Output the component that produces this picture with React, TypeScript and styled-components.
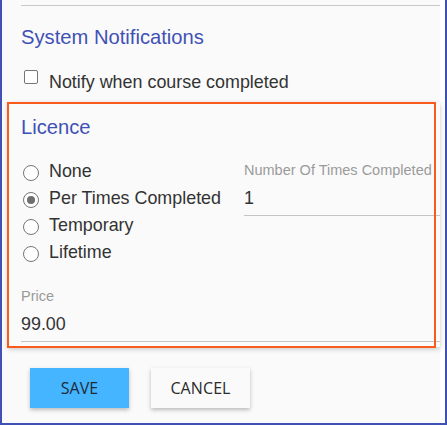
import React from "react";
import styled, { createGlobalStyle } from "styled-components";

const Global = createGlobalStyle`
  html, body { margin: 0; padding: 0; background: #ffffff; }
  * { box-sizing: border-box; }
`;

const Frame = styled.div`
  width: 447px;
  height: 425px;
  border: 2px solid #3f51b5;
  border-top: none;
  display: flex;
  background: #ffffff;
  font-family: "Liberation Sans", Arial, sans-serif;
  overflow: hidden;
`;

const Panel = styled.div`
  width: 438px;
  background: #fafafa;
  padding-left: 19px;
  display: flex;
  flex-direction: column;
`;

const Rule = styled.div`
  height: 1px;
  margin-top: 5px;
  background: #c8c8c8;
`;

const Title = styled.h2<{ $top: number }>`
  margin: ${(p) => p.$top}px 0 0 0;
  font-size: 20.2px;
  line-height: 24px;
  font-weight: normal;
  color: #3f51b5;
`;

const CheckRow = styled.label`
  display: flex;
  align-items: flex-start;
  margin-top: 22px;
  font-size: 17.9px;
  line-height: 22px;
  color: #333333;
`;

const Box = styled.span`
  width: 14px;
  height: 14px;
  margin: -1px 11px 0 3px;
  border: 1px solid #767676;
  border-radius: 2px;
  background: #ffffff;
  flex: none;
`;

const Card = styled.section`
  position: relative;
  margin: 9px 0 0 -13px;
  padding: 13px 0 5px 13px;
  background: #fafafa;
  box-shadow: 0 2px 5px rgba(0, 0, 0, 0.22);
`;

const Highlight = styled.div`
  position: absolute;
  left: -1px;
  top: 0;
  width: 429px;
  height: 246px;
  border: 2px solid #fa5a1c;
  pointer-events: none;
`;

const Columns = styled.div`
  display: grid;
  grid-template-columns: 223px 1fr;
  margin-top: 19px;
`;

const RadioGroup = styled.div`
  display: flex;
  flex-direction: column;
`;

const RadioRow = styled.label`
  display: flex;
  align-items: flex-start;
  height: 27px;
  font-size: 17.9px;
  line-height: 27px;
  color: #333333;
`;

const Circle = styled.span<{ $on?: boolean }>`
  width: 16px;
  height: 16px;
  margin: 7px 10px 0 2px;
  border: 1px solid #767676;
  border-radius: 50%;
  background: #ffffff;
  flex: none;
  display: flex;
  align-items: center;
  justify-content: center;
  &::after {
    content: "";
    display: ${(p) => (p.$on ? "block" : "none")};
    width: 8px;
    height: 8px;
    border-radius: 50%;
    background: #6e6e6e;
  }
`;

const Field = styled.div<{ $top: number }>`
  display: flex;
  flex-direction: column;
  margin-top: ${(p) => p.$top}px;
`;

const FieldLabel = styled.div`
  font-size: 14.5px;
  line-height: 16px;
  color: #9a9a9a;
  white-space: nowrap;
`;

const FieldValue = styled.div`
  margin-top: 9px;
  padding-bottom: 6px;
  font-size: 17.9px;
  line-height: 22px;
  color: #333333;
  border-bottom: 1px solid #c4c4c4;
`;

const Buttons = styled.div`
  display: flex;
  gap: 22px;
  margin-top: 21px;
  padding-left: 9px;
`;

const Button = styled.button<{ $primary?: boolean }>`
  width: 99px;
  height: 40px;
  border: none;
  border-radius: 0;
  font-family: "Open Sans", "Noto Sans", sans-serif;
  font-size: 16px;
  letter-spacing: 0.1px;
  color: ${(p) => (p.$primary ? "#1f2a36" : "#2a2a2a")};
  background: ${(p) => (p.$primary ? "#45b5ff" : "#fafafa")};
  box-shadow: 0 2px 4px rgba(0, 0, 0, 0.25);
  cursor: pointer;
`;

const options = [
  { label: "None", on: false },
  { label: "Per Times Completed", on: true },
  { label: "Temporary", on: false },
  { label: "Lifetime", on: false },
];

export default function App() {
  return (
    <>
      <Global />
      <Frame>
        <Panel>
          <Rule />
          <Title $top={19}>System Notifications</Title>
          <CheckRow>
            <Box />
            Notify when course completed
          </CheckRow>
          <Card>
            <Title $top={0}>Licence</Title>
            <Columns>
              <RadioGroup>
                {options.map((o) => (
                  <RadioRow key={o.label}>
                    <Circle $on={o.on} />
                    {o.label}
                  </RadioRow>
                ))}
              </RadioGroup>
              <Field $top={4}>
                <FieldLabel>Number Of Times Completed</FieldLabel>
                <FieldValue>1</FieldValue>
              </Field>
            </Columns>
            <Field $top={22}>
              <FieldLabel>Price</FieldLabel>
              <FieldValue>99.00</FieldValue>
            </Field>
            <Highlight />
          </Card>
          <Buttons>
            <Button $primary>SAVE</Button>
            <Button>CANCEL</Button>
          </Buttons>
        </Panel>
      </Frame>
    </>
  );
}
